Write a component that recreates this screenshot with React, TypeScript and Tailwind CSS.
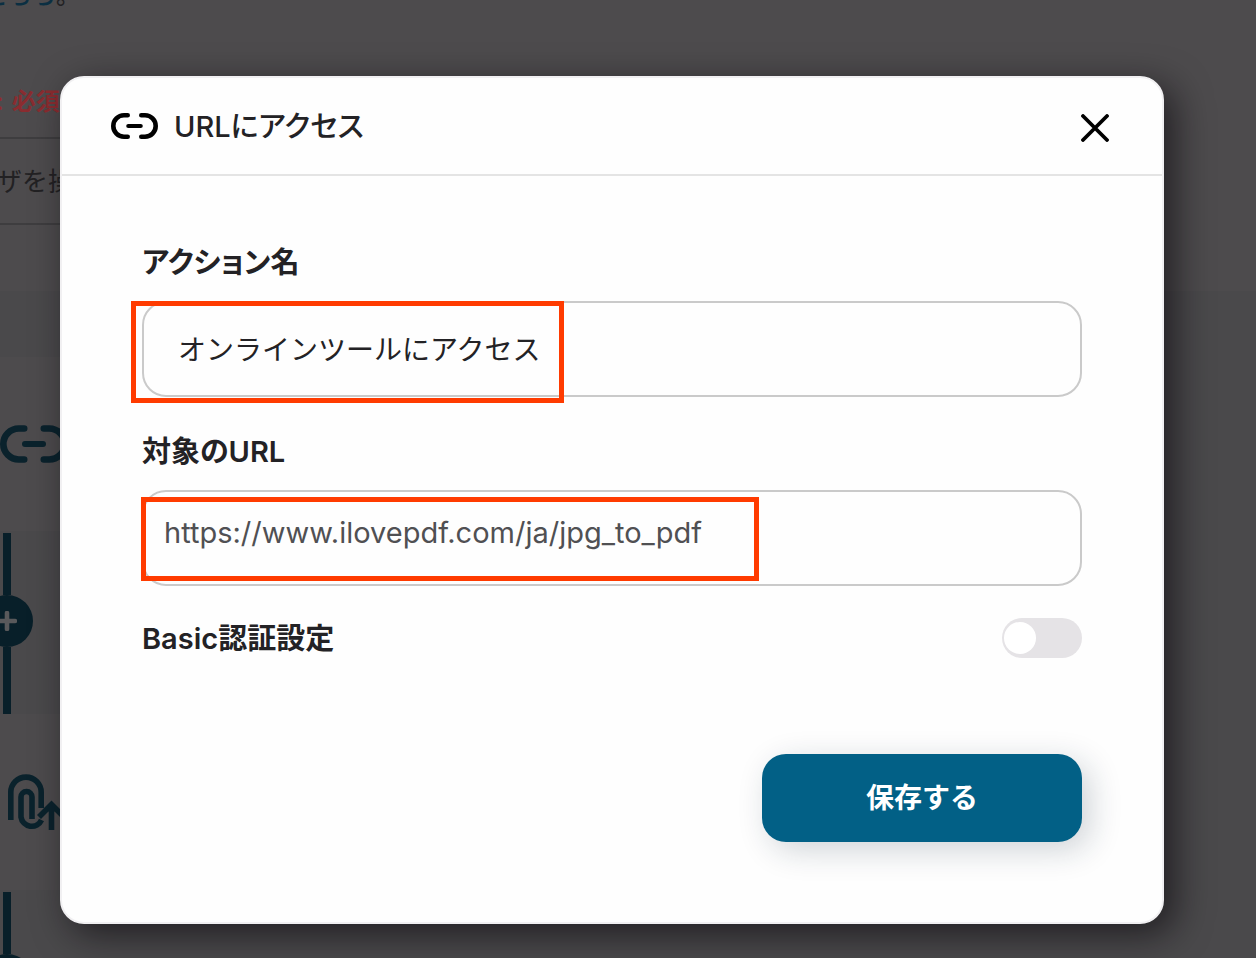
import { useState } from "react";
import type { ReactNode } from "react";

function LinkIcon({ className }: { className: string }) {
  return (
    <svg viewBox="0 0 47 26" fill="none" className={className} aria-hidden="true">
      <g stroke="currentColor" strokeWidth="4.6" strokeLinecap="round">
        <path d="M16.7 2.3H13a10.7 10.7 0 0 0 0 21.4h3.7" />
        <path d="M30.3 2.3H34a10.7 10.7 0 0 1 0 21.4h-3.7" />
        <path d="M17.3 13h12.4" strokeWidth="4.2" />
      </g>
    </svg>
  );
}

function ClipUploadIcon() {
  return (
    <svg viewBox="0 0 60 58" fill="none" className="h-[58px] w-[60px]" aria-hidden="true">
      <g stroke="currentColor" strokeWidth="5.6">
        <path d="M2.8 47V19.300a15.200 15.200 0 0 1 30.400 0V35" />
        <path d="M24 46V24a5.500 5.500 0 0 0-11 0V44a10.800 10.800 0 0 0 20.500 3" />
        <path d="M43.500 57V33M31 44l12.500-12.500L56 44" />
      </g>
    </svg>
  );
}

function CloseIcon() {
  return (
    <svg viewBox="0 0 28 28" fill="none" className="size-7" aria-hidden="true">
      <path d="M2 2l24 24M26 2L2 26" stroke="currentColor" strokeWidth="3.8" strokeLinecap="round" />
    </svg>
  );
}

function Connector() {
  return (
    <div className="flex h-[183px] w-[14px] shrink-0 flex-col items-center pt-[2px]">
      <div className="h-[62px] w-2 bg-[#081f29]" />
      <div className="flex size-[52px] shrink-0 items-center justify-center rounded-full bg-[#081f29]">
        <svg viewBox="0 0 20 20" className="size-5" aria-hidden="true">
          <path d="M10 2v16M2 10h16" stroke="#59595b" strokeWidth="4.6" strokeLinecap="round" />
        </svg>
      </div>
      <div className="w-2 flex-1 bg-[#081f29]" />
    </div>
  );
}

/* The flow editor that stays dimmed behind the dialog */
function FlowEditor() {
  return (
    <div
      aria-hidden="true"
      className="col-start-1 row-start-1 flex h-screen flex-col overflow-hidden bg-[#4d4b4d] text-[#222123]"
    >
      <p className="-mt-4 -ml-4 h-[104px] shrink-0 text-2xl leading-6 font-medium">
        <span className="text-[#0b2f42]">こちら</span>。
      </p>
      <p className="-ml-1 flex h-[49px] shrink-0 gap-2 text-2xl leading-7 font-semibold text-[#8a2c30]">
        <span>:</span>必須
      </p>
      <div className="flex h-[88px] w-1/2 shrink-0 items-center border-y-2 border-[#3e3d3f]">
        <span className="-ml-1 text-[26px]">ザを操作</span>
      </div>
      <div className="mt-[66px] flex-1 bg-[#4a494b] pt-[66px]">
        <div className="flex h-[174px] w-1/2 items-center bg-[#4d4b4d] text-[#0a222c]">
          <LinkIcon className="h-[38px] w-[68px]" />
        </div>
        <Connector />
        <div className="flex h-[176px] w-1/2 items-center bg-[#4d4b4d] pl-2 text-[#0a222c]">
          <ClipUploadIcon />
        </div>
        <Connector />
      </div>
    </div>
  );
}

type FieldProps = {
  id: string;
  label: string;
  children: ReactNode;
};

function Field({ id, label, children }: FieldProps) {
  return (
    <div className="flex flex-col gap-4">
      <label
        htmlFor={id}
        className="text-[29px] leading-[45px] font-semibold [font-feature-settings:'palt']"
      >
        {label}
      </label>
      <div className="relative">{children}</div>
    </div>
  );
}

export default function App() {
  const [name, setName] = useState("オンラインツールにアクセス");
  const [url, setUrl] = useState("https://www.ilovepdf.com/ja/jpg_to_pdf");
  const [basicAuth, setBasicAuth] = useState(false);

  return (
    <div
      lang="ja"
      className="grid h-screen grid-cols-1 overflow-hidden font-['Inter','Noto_Sans_CJK_JP',sans-serif] text-[#232225]"
    >
      <FlowEditor />

      <div className="z-10 col-start-1 row-start-1 pt-19 pr-23 pl-15">
        <div
          role="dialog"
          aria-labelledby="dialog-title"
          className="rounded-3xl border-2 border-[#f1f0f2] bg-[#fefefe] shadow-[10px_10px_36px_rgba(10,8,12,0.65)]"
        >
          {/* Header */}
          <div className="flex h-[98px] items-center justify-between border-b-2 border-[#e4e4e4] px-[49px]">
            <div className="flex items-center gap-4">
              <LinkIcon className="h-[26px] w-[47px] text-black" />
              <h2
                id="dialog-title"
                className="text-[29px] leading-[45px] font-medium [font-feature-settings:'palt']"
              >
                URLにアクセス
              </h2>
            </div>
            <button type="button" aria-label="閉じる" className="px-1 pt-2 pb-1 text-black">
              <CloseIcon />
            </button>
          </div>

          {/* Body */}
          <form
            className="flex flex-col gap-8 px-20 pt-16 pb-20"
            onSubmit={(e) => e.preventDefault()}
          >
            <Field id="action-name" label="アクション名">
              <input
                id="action-name"
                type="text"
                value={name}
                onChange={(e) => setName(e.target.value)}
                className="block h-24 w-full rounded-3xl border-2 border-[#cacaca] px-[34px] pb-[2px] text-[28px] outline-none"
              />
              <div className="pointer-events-none absolute top-0 -left-[11px] h-[102px] w-[433px] border-5 border-[#ff3b00]" />
            </Field>

            <Field id="target-url" label="対象のURL">
              <input
                id="target-url"
                type="text"
                value={url}
                onChange={(e) => setUrl(e.target.value)}
                className="block h-24 w-full rounded-3xl border-2 border-[#cacaca] px-5 pb-3 text-[29px] text-[#505053] outline-none"
              />
              <div className="pointer-events-none absolute top-[7px] -left-px h-[84px] w-[618px] border-5 border-[#ff3b00]" />
            </Field>

            <div className="flex h-10 items-center justify-between">
              <label
                htmlFor="basic-auth"
                className="text-[29px] leading-[45px] font-semibold [font-feature-settings:'palt']"
              >
                Basic認証設定
              </label>
              <input
                id="basic-auth"
                type="checkbox"
                role="switch"
                checked={basicAuth}
                onChange={(e) => setBasicAuth(e.target.checked)}
                className="flex h-10 w-20 cursor-pointer appearance-none items-center rounded-full bg-[#e5e3e6] px-[2px] before:size-8 before:rounded-full before:bg-white checked:justify-end checked:bg-[#026086]"
              />
            </div>

            <button
              type="submit"
              className="mt-16 h-22 w-80 self-end rounded-3xl bg-[#026086] text-[28px] font-semibold text-white shadow-[8px_8px_32px_rgba(20,40,60,0.2)]"
            >
              保存する
            </button>
          </form>
        </div>
      </div>
    </div>
  );
}
